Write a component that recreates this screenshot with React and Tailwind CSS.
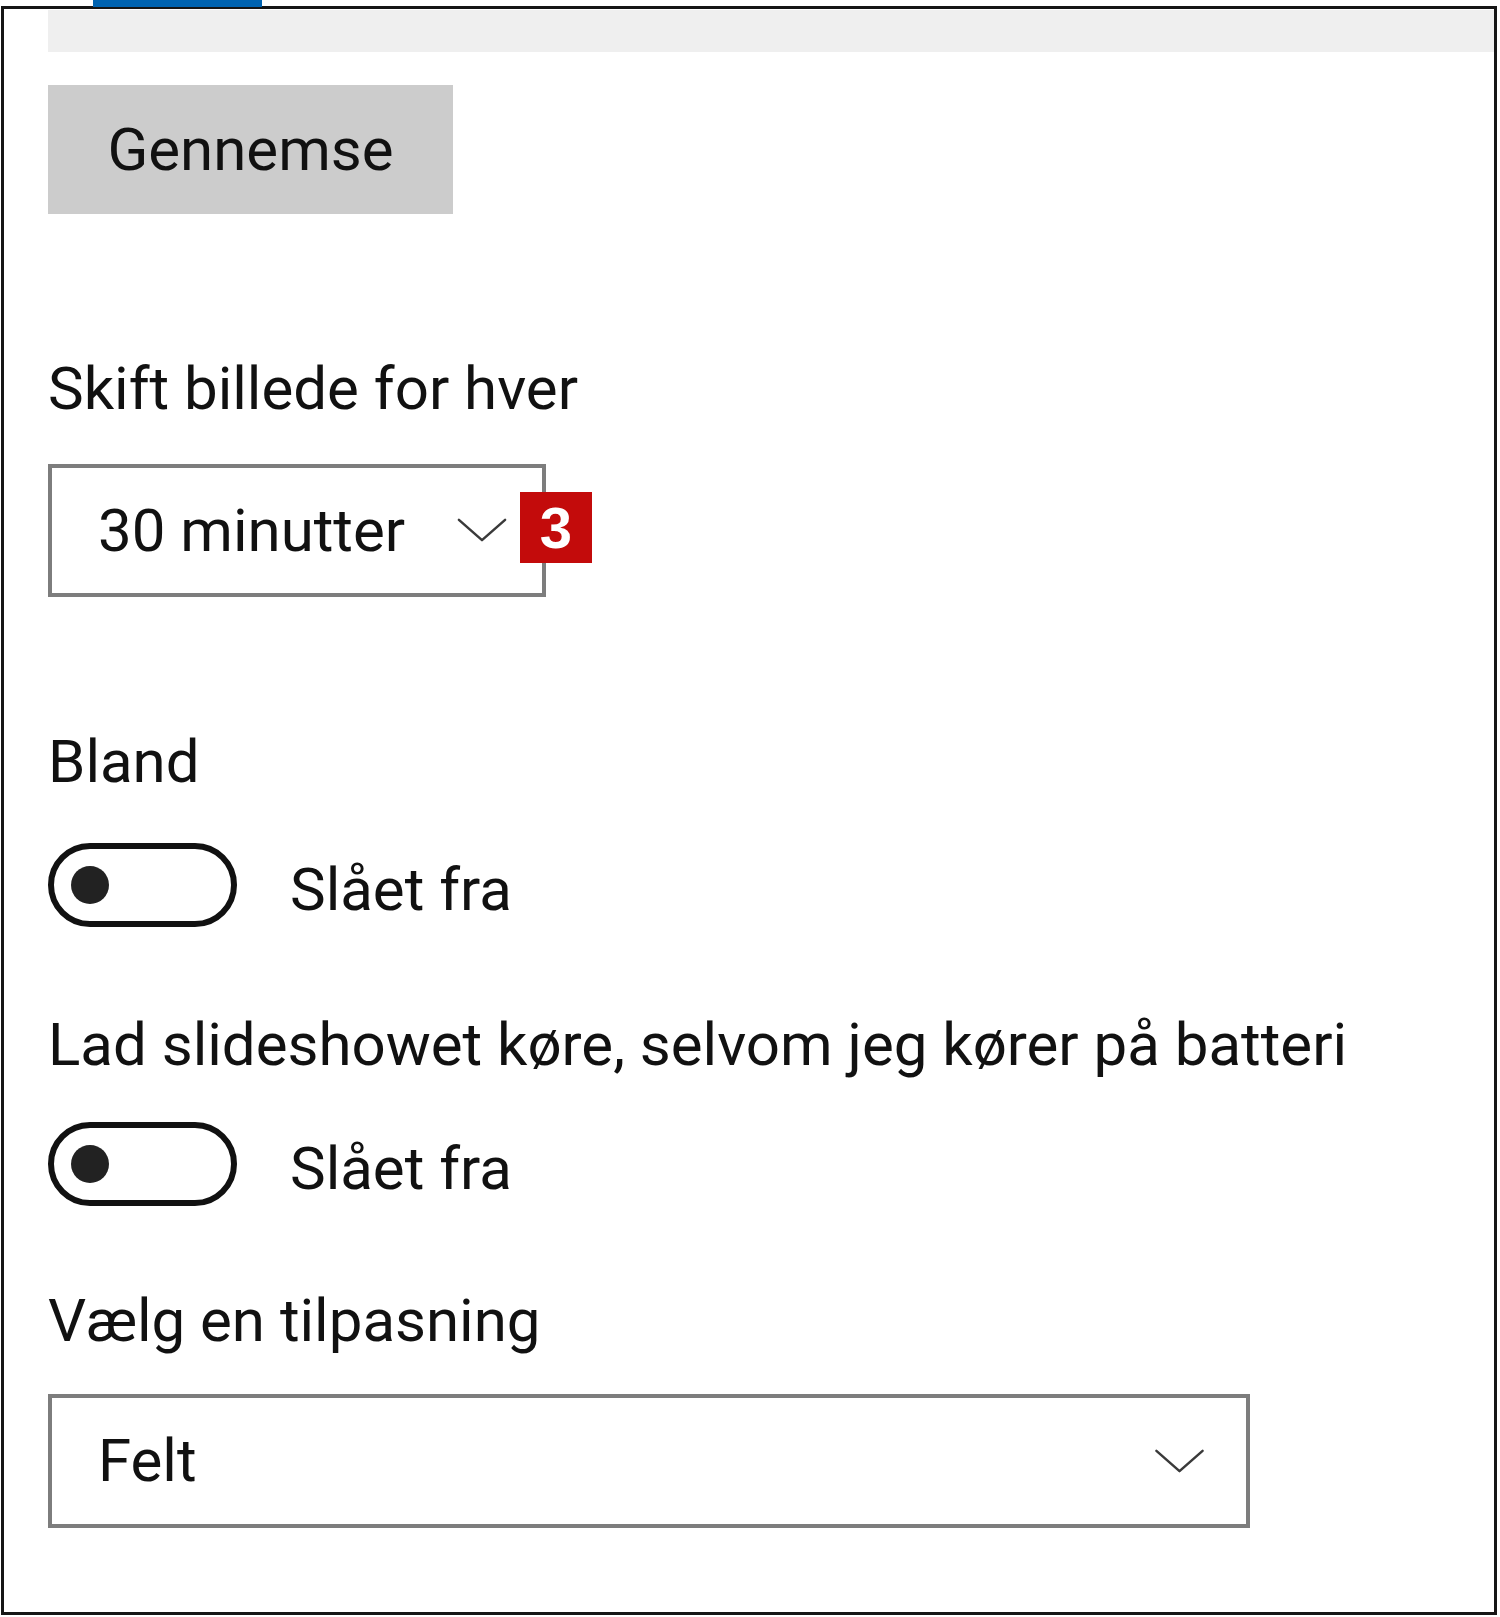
import React from 'react'

const font = { fontFamily: 'Roboto, "Noto Sans", sans-serif' }

const Chevron = ({ className }) => (
  <svg className={className} viewBox="0 0 52 26" fill="none">
    <polyline points="2,2 26,23 50,2" stroke="#3a3a3a" strokeWidth="2.6" strokeLinecap="round" strokeLinejoin="round" />
  </svg>
)

const Toggle = ({ label, className }) => (
  <div className={`flex items-start ${className}`}>
    <div className="w-[189px] h-[84px] rounded-full border-[6px] border-[#111] flex items-center pl-[17px]">
      <div className="w-[38px] h-[38px] rounded-full bg-[#222]" />
    </div>
    <span className="ml-[53px] mt-[16px] text-[60px] leading-[62px] text-[#111]">{label}</span>
  </div>
)

const Label = ({ children, className }) => (
  <p className={`text-[60px] leading-[62px] text-[#111] whitespace-nowrap ${className}`}>{children}</p>
)

export default function App() {
  return (
    <div className="relative w-[1500px] h-[1617px] bg-white pt-[6px] pl-[1px] pr-[3px] pb-[2px]" style={font}>
      <div className="absolute top-0 left-[93px] w-[169px] h-[7px] bg-[#0063b1]" />
      <div className="h-full border-[3px] border-[#161616] pl-[44px] flex flex-col">
        <div className="mt-[1px] h-[42px] bg-[#efefef]" />

        <button className="mt-[33px] w-[405px] h-[129px] bg-[#cccccc] text-[60px] leading-[62px] text-[#111] flex items-center justify-center">
          Gennemse
        </button>

        <Label className="mt-[144px]">Skift billede for hver</Label>

        <div className="relative mt-[44px] w-[498px] h-[133px] border-4 border-[#7d7d7d] flex items-center pl-[46px]">
          <span className="text-[60px] leading-[62px] text-[#111]">30 minutter</span>
          <Chevron className="ml-[52px] w-[50px] h-[25px]" />
          <div className="absolute left-[468px] top-[24px] w-[72px] h-[71px] bg-[#c30b0b] flex items-center justify-center">
            <span className="text-white font-bold text-[58px] leading-none" style={{ fontFamily: '"Liberation Sans", Arial, sans-serif' }}>3</span>
          </div>
        </div>

        <Label className="mt-[134px]">Bland</Label>
        <Toggle className="mt-[50px]" label="Slået fra" />

        <Label className="mt-[87px]">Lad slideshowet køre, selvom jeg kører på batteri</Label>
        <Toggle className="mt-[46px]" label="Slået fra" />

        <Label className="mt-[84px]">Vælg en tilpasning</Label>

        <div className="mt-[42px] w-[1202px] h-[134px] border-4 border-[#7d7d7d] flex items-center justify-between pl-[46px] pr-[40px]">
          <span className="text-[60px] leading-[62px] text-[#111]">Felt</span>
          <Chevron className="w-[53px] h-[25px]" />
        </div>
      </div>
    </div>
  )
}
